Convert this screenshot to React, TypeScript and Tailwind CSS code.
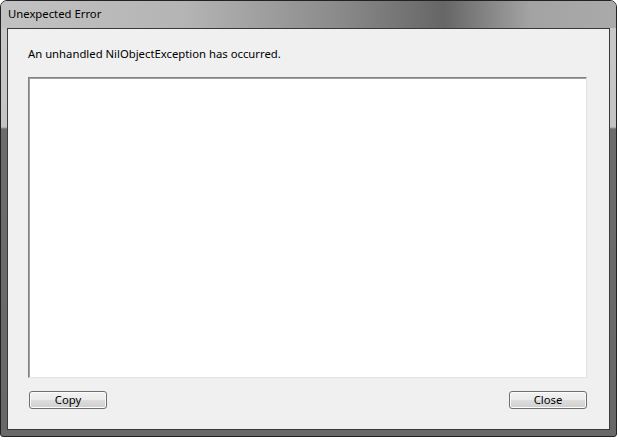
const Button = ({ label }: { label: string }) => (
  <button className="w-[78px] h-[18px] rounded-[3px] border border-[#707070] bg-[linear-gradient(to_bottom,#f2f2f2_0%,#ebebeb_50%,#dddddd_50%,#cfcfcf_100%)] shadow-[inset_0_0_0_1px_#fcfcfc] text-[11.3px] leading-[16px] text-black flex items-center justify-center">
    {label}
  </button>
);

export default function App() {
  return (
    <div className="w-[618px] h-[441px] bg-white font-['Noto_Sans','Liberation_Sans',sans-serif]">
      <div className="relative w-[617px] h-[437px] rounded-t-[7px] rounded-b-[3px] border border-[#222] bg-[linear-gradient(to_bottom,#c9c9c9_0px,#c4c4c4_126px,#6c6c6c_128px,#686868_100%)] flex flex-col overflow-hidden">
        <div className="absolute inset-x-0 top-0 h-[27px] bg-[linear-gradient(to_right,#c2c2c2_0%,#b4b4b4_30%,#8a8a8a_55%,#666666_72%,#a3a3a3_86%,#aaaaaa_100%)]" />
        <div className="relative h-[27px] pl-[7px] flex items-center text-[11.3px] text-black">
          Unexpected Error
        </div>
        <div className="relative flex-1 mx-[6px] mb-[6px] border border-[#3a3a3a] bg-[#f0f0f0] flex flex-col pl-[20px] pr-[22px] pt-[17px] pb-[19px]">
          <p className="text-[11.3px] leading-[16px] text-black">
            An unhandled NilObjectException has occurred.
          </p>
          <div className="mt-[15px] h-[301px] bg-white border-t border-l border-t-[#828282] border-l-[#828282] border-r border-b border-r-[#e3e3e3] border-b-[#e3e3e3] shadow-[inset_1px_1px_0_#a0a0a0]" />
          <div className="mt-[13px] flex justify-between pl-[1px]">
            <Button label="Copy" />
            <Button label="Close" />
          </div>
        </div>
      </div>
    </div>
  );
}
